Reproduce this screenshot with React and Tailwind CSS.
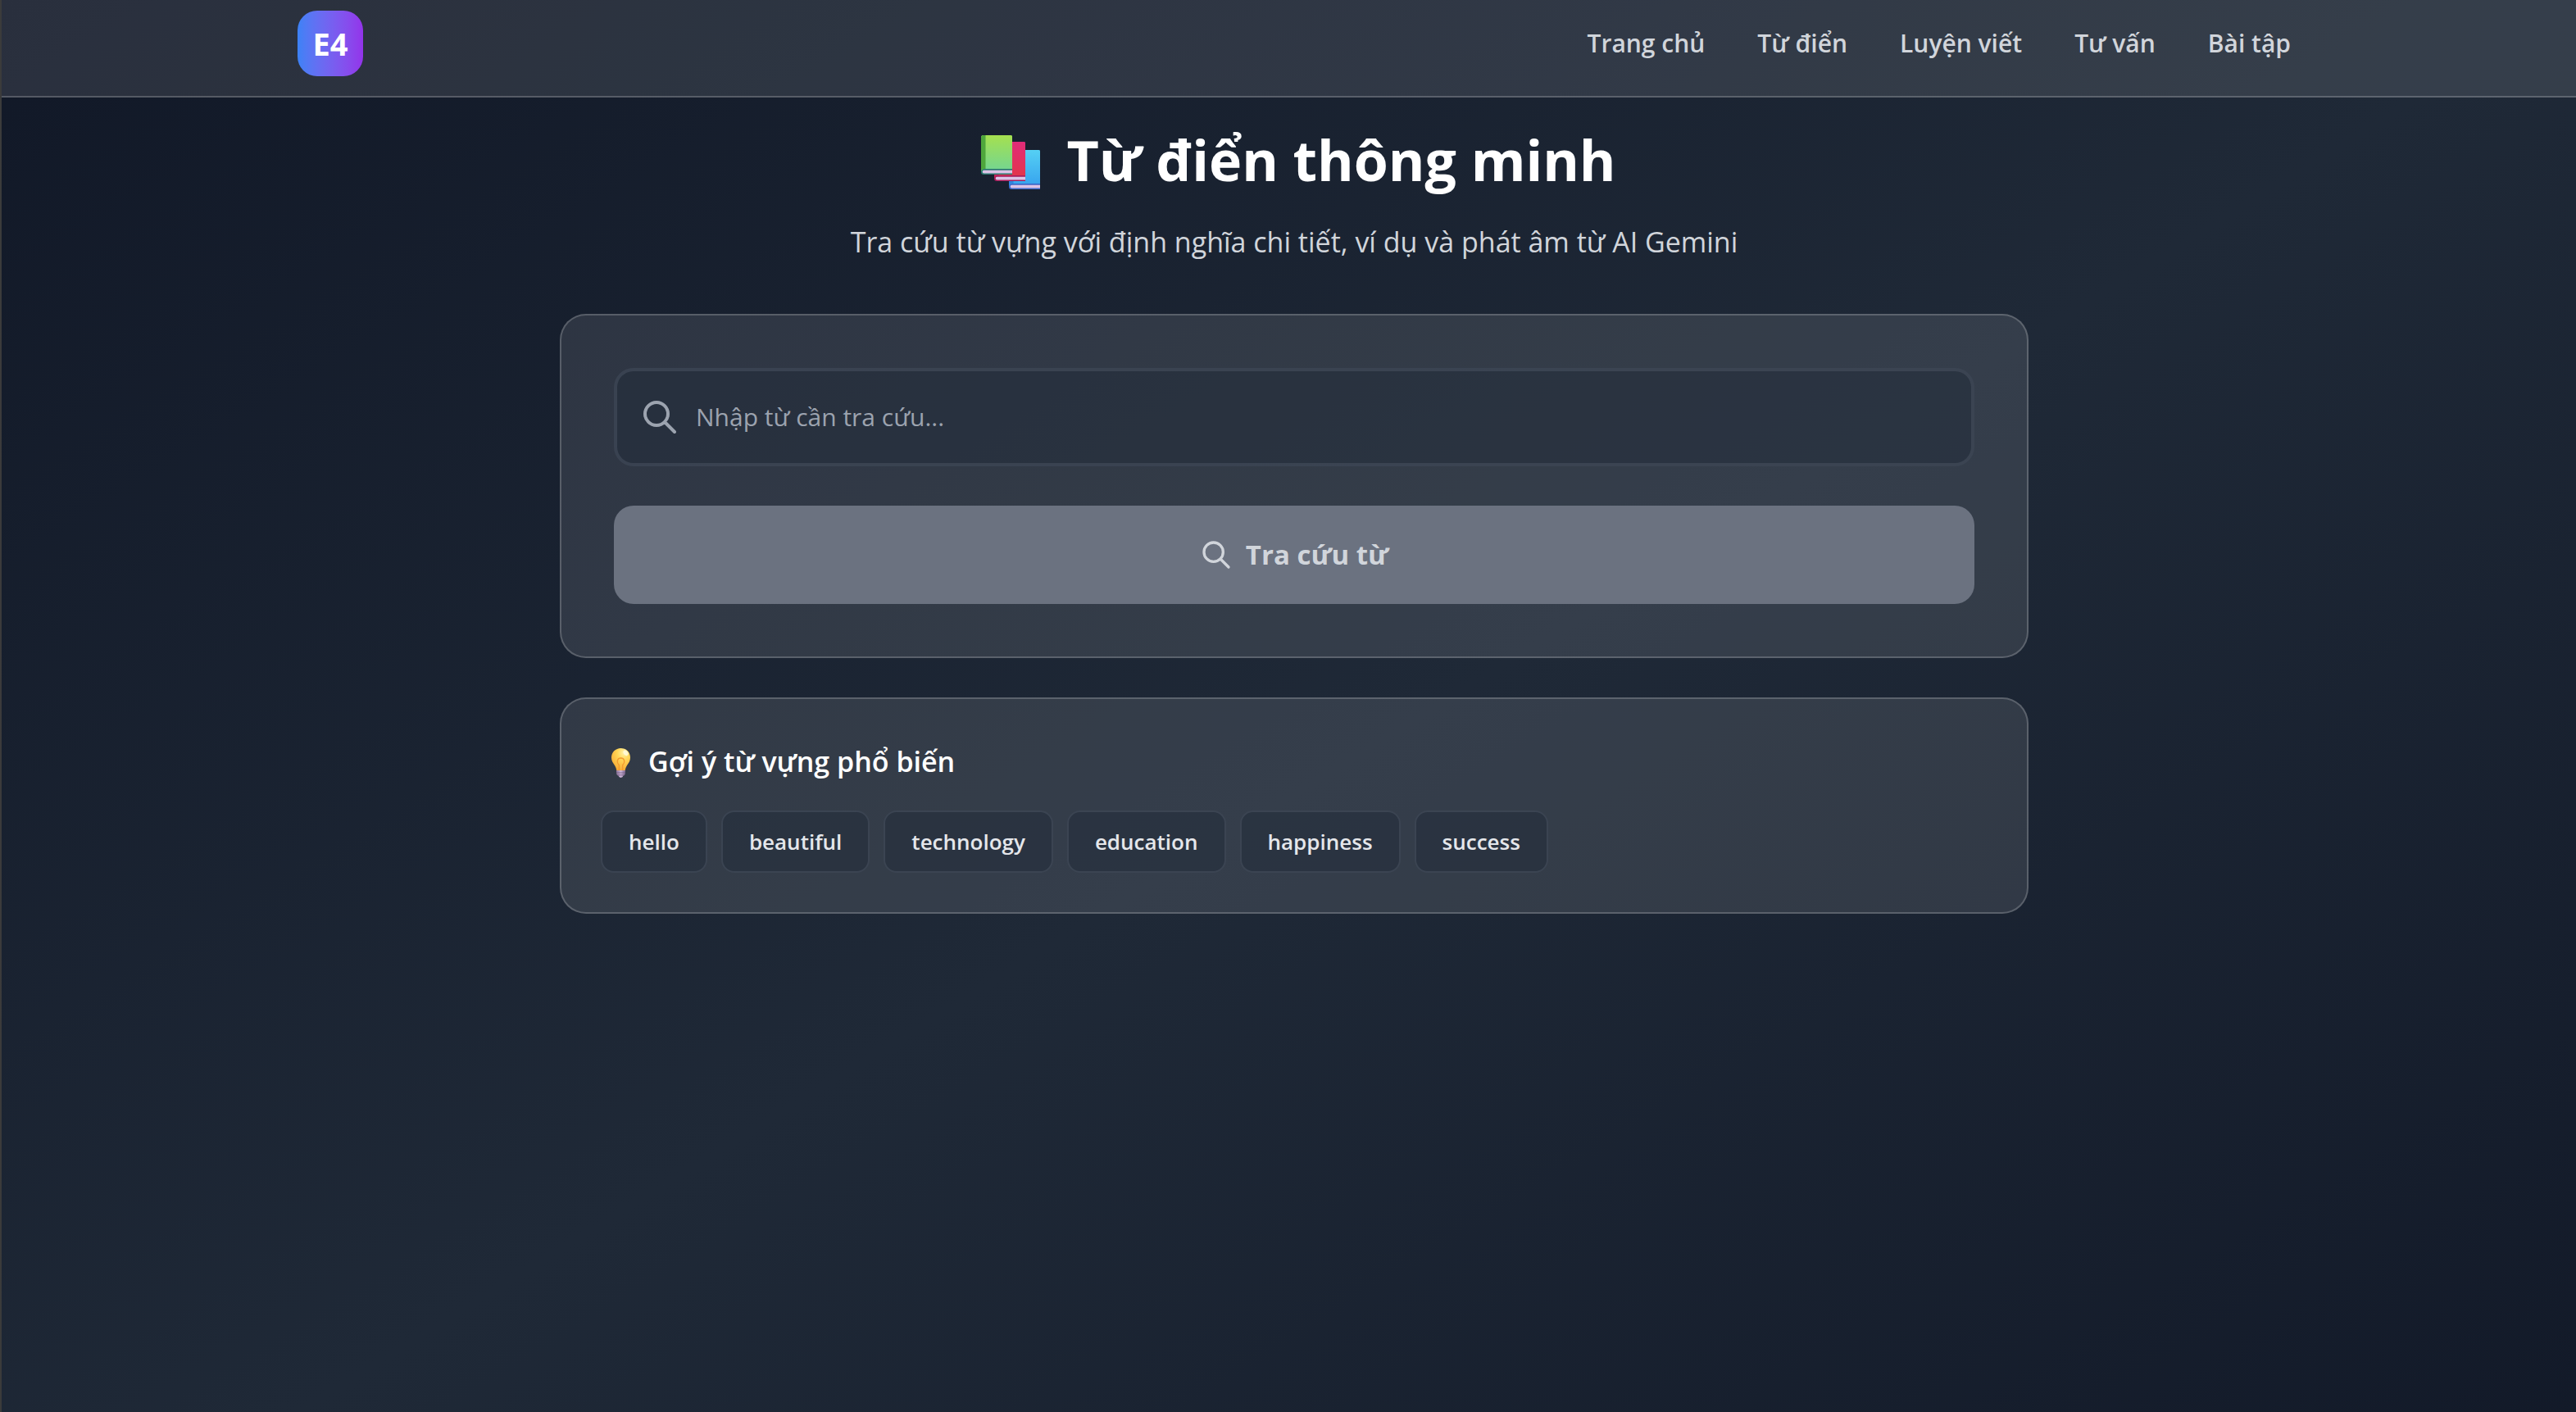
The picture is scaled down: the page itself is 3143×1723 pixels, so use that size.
const links = ['Trang chủ', 'Từ điển', 'Luyện viết', 'Tư vấn', 'Bài tập'];
const words = ['hello', 'beautiful', 'technology', 'education', 'happiness', 'success'];

function SearchIcon({ className }) {
  return (
    <svg className={className} viewBox="0 0 24 24" fill="none" stroke="currentColor" strokeWidth="2" strokeLinecap="round" strokeLinejoin="round" aria-hidden="true">
      <path d="M21 21l-6-6m2-5a7 7 0 11-14 0 7 7 0 0114 0z" />
    </svg>
  );
}

function Book({ x, y, cover, spine, base }) {
  return (
    <g transform={`translate(${x} ${y})`}>
      <path d="M3 0H36.500Q38 0 38 1.500V48H3Q0 48 0 45V3Q0 0 3 0Z" fill={base} />
      <path d="M3 0H36.500Q38 0 38 1.500V41H4Q1 41 0 44V3Q0 0 3 0Z" fill={`url(#${cover})`} />
      <path d="M3 0H5.500V41H4Q1 41 0 44V3Q0 0 3 0Z" fill={spine} />
      <path d="M3.500 42.800H38V46.500H3.500Q1.700 46.500 1.700 44.700Q1.700 42.800 3.500 42.800Z" fill="#dcc3e6" />
    </g>
  );
}

function Books() {
  return (
    <svg className="h-[72px] w-[83px] shrink-0" viewBox="-11 -6 83 72" aria-hidden="true">
      <defs>
        <linearGradient id="green" x1="0" y1="0" x2="0" y2="1"><stop offset="0" stopColor="#a5e04f" /><stop offset="1" stopColor="#73d692" /></linearGradient>
        <linearGradient id="red" x1="0" y1="0" x2="0" y2="1"><stop offset="0" stopColor="#e12c79" /><stop offset="1" stopColor="#e2364a" /></linearGradient>
        <linearGradient id="blue" x1="0" y1="0" x2="0" y2="1"><stop offset="0" stopColor="#55d0f4" /><stop offset="1" stopColor="#37a3ee" /></linearGradient>
      </defs>
      <Book x={34} y={18} cover="blue" spine="#2f84dc" base="#3c69c9" />
      <Book x={16} y={8} cover="red" spine="#c3235c" base="#a81d5b" />
      <Book x={0} y={0} cover="green" spine="#4fa63c" base="#2b7a70" />
    </svg>
  );
}

function Bulb() {
  return (
    <svg className="h-10 w-11 shrink-0" viewBox="0 0 44 40" aria-hidden="true">
      <defs>
        <radialGradient id="glass" cx=".65" cy=".2" r=".85"><stop offset="0" stopColor="#fff3a6" /><stop offset=".4" stopColor="#ffd556" /><stop offset="1" stopColor="#f5a733" /></radialGradient>
        <linearGradient id="cap" x1="0" x2="1"><stop offset="0" stopColor="#8d7399" /><stop offset=".5" stopColor="#cdb6d8" /><stop offset="1" stopColor="#7d668c" /></linearGradient>
      </defs>
      <path d="M24.500 4C18 4 13 9 13 15.500C13 19.500 15 22 17 25C18.500 27.500 19 29 19.300 31.500H29.700C30 29 30.500 27.500 32 25C34 22 36 19.500 36 15.500C36 9 31 4 24.500 4Z" fill="url(#glass)" />
      <path d="M22.300 31V24.500C18.500 20.500 20.500 16 24.500 16S30.500 20.500 26.700 24.500V31" fill="none" stroke="#f29a2e" strokeWidth="1.300" />
      <ellipse cx="30.500" cy="9.800" rx="2.600" ry="3.600" transform="rotate(-35 30.500 9.800)" fill="#fffbe0" opacity=".85" />
      <path d="M19 31H30V33.200L29.500 34L30 35L29 36.800L27 38V39L24.500 40L22 39V38L20 36.800L19 35L19.500 34L19 33.200Z" fill="url(#cap)" />
      <path d="M19.500 34H29.500M20 36.800H29" stroke="#725a82" strokeWidth=".8" />
    </svg>
  );
}

const card = 'rounded-[32px] border-2 border-white/20 bg-white/10';

export default function App() {
  return (
    <div className="min-h-screen border-l-2 border-[#3b3b3b] bg-linear-to-br from-[#111827] via-[#1f2937] to-[#111827] bg-size-[100%_113%] bg-no-repeat font-['Open_Sans','Noto_Sans',sans-serif] text-white">
      <header className="border-b-2 border-white/20 bg-white/10 pt-[13px] pb-6 pl-[13px]">
        <div className="mx-auto flex max-w-[2560px] items-center justify-between px-16">
          <a href="#home" className="flex size-20 items-center justify-center rounded-[24px] bg-linear-to-r from-[#3b82f6] to-[#9333ea] text-[38px] leading-[56px] font-bold">E4</a>
          <nav className="flex gap-16 text-[30px] leading-[48px] font-semibold text-[#d1d5db]">
            {links.map((l) => <a key={l} href="#page">{l}</a>)}
          </nav>
        </div>
      </header>
      <main className="pl-[13px]">
        <div className="mx-auto max-w-[1792px] pt-9">
          <h1 className="flex items-center justify-center gap-8 text-[68px] leading-[80px] font-bold"><Books />Từ điển thông minh</h1>
          <p className="mt-8 text-center text-[34px] leading-[56px] text-[#d1d5db]">Tra cứu từ vựng với định nghĩa chi tiết, ví dụ và phát âm từ AI Gemini</p>
          <form className={`${card} mt-15 flex flex-col gap-12 p-16`}>
            <label className="flex h-30 items-center gap-5 rounded-[24px] border-4 border-[#4b5563]/50 bg-[#1f2937]/50 px-7">
              <SearchIcon className="size-12 shrink-0 text-[#9ca3af]" />
              <input aria-label="Từ cần tra cứu" placeholder="Nhập từ cần tra cứu..." className="w-full bg-transparent text-[30px] leading-[48px] outline-none placeholder:text-[#9ca3af]" />
            </label>
            <button type="button" className="flex h-30 items-center justify-center gap-4 rounded-[24px] bg-[#6b7280] text-[33px] leading-[56px] font-bold text-[#d1d5db]">
              <SearchIcon className="size-10" />Tra cứu từ
            </button>
          </form>
          <section className={`${card} mt-12 p-12`}>
            <h2 className="flex items-center gap-[14px] text-[34px] leading-[56px] font-semibold"><Bulb />Gợi ý từ vựng phổ biến</h2>
            <div className="mt-8 flex flex-wrap gap-[17px]">
              {words.map((w) => <button key={w} type="button" className="rounded-[16px] border-2 border-[#4b5563]/50 bg-[#1f2937]/50 px-8 py-4 text-[26px] leading-[40px] font-semibold text-[#e5e7eb]">{w}</button>)}
            </div>
          </section>
        </div>
      </main>
    </div>
  );
}
